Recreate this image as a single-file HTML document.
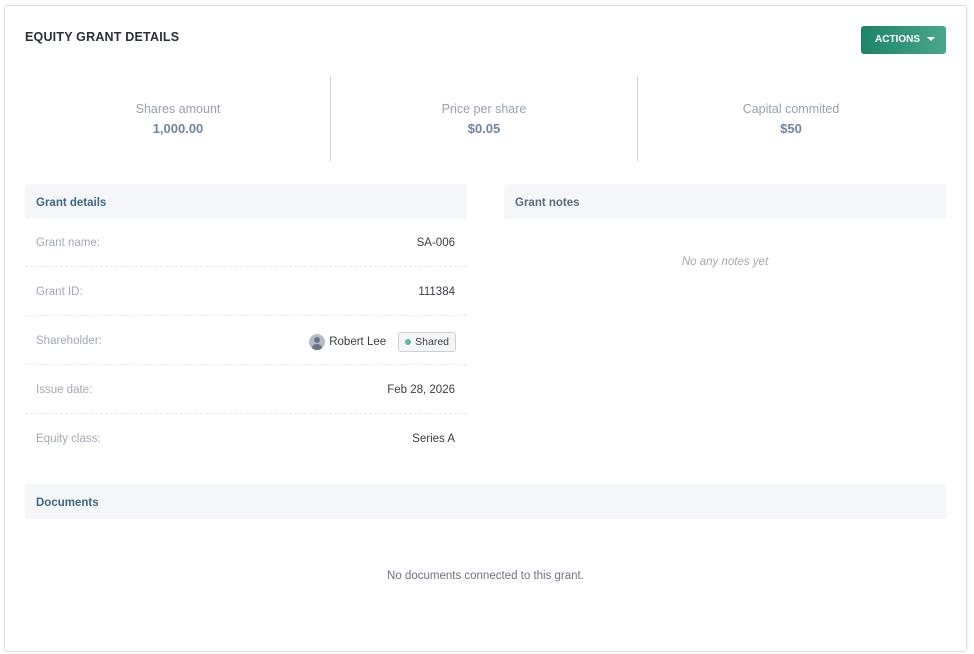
<!DOCTYPE html>
<html><head><style>
*{box-sizing:border-box;margin:0;padding:0}
body{width:974px;height:654px;background:#fff;font-family:"Liberation Sans",sans-serif;position:relative;overflow:hidden}
.card{position:absolute;left:4px;top:5px;width:963px;height:647px;border:1px solid #dcdfe3;border-radius:3px;box-shadow:0 0 2px rgba(0,0,0,.08)}
.abs{position:absolute}
.title{left:25px;top:30px;font-size:12.5px;font-weight:bold;color:#2b2f36;letter-spacing:.2px}
.btn{left:861px;top:26px;width:85px;height:28px;border-radius:3px;background:linear-gradient(90deg,#1c8468,#4aa68d);color:#fff;font-size:10px;font-weight:bold;line-height:28px;padding-left:14px}
.btn:after{content:"";position:absolute;left:66px;top:11px;border:4px solid transparent;border-top:4px solid #fff;border-bottom:0}
.stat{top:102px;width:306px;text-align:center}
.stat .l{font-size:12.5px;color:#9aa0ad}
.stat .v{font-size:13px;font-weight:bold;color:#7183a6;margin-top:5px}
.vl{top:76px;width:1px;height:85px;background:#d0d4da}
.hdr{height:35px;background:#f4f6f9;border-radius:3px;font-size:11.5px;font-weight:bold;color:#3f6788;padding-left:11px;line-height:35px;padding-top:2px}
.row{left:25px;width:442px;height:49px;border-bottom:1px dashed #e8eaee;font-size:11.5px;line-height:49px}
.row .k{position:absolute;left:11px;top:1px;color:#a3a8b2}
.row .val{position:absolute;right:12px;top:1px;color:#3a3e45}
</style></head><body>
<div class="card"></div>
<div class="abs title">EQUITY GRANT DETAILS</div>
<div class="abs btn">ACTIONS</div>
<div class="abs stat" style="left:25px"><div class="l">Shares amount</div><div class="v">1,000.00</div></div>
<div class="abs vl" style="left:330px"></div>
<div class="abs stat" style="left:331px"><div class="l">Price per share</div><div class="v">$0.05</div></div>
<div class="abs vl" style="left:637px"></div>
<div class="abs stat" style="left:638px"><div class="l">Capital commited</div><div class="v">$50</div></div>
<div class="abs hdr" style="left:25px;top:184px;width:442px">Grant details</div>
<div class="abs hdr" style="left:504px;top:184px;width:442px;color:#5f6b7a">Grant notes</div>
<div class="abs" style="left:504px;top:256px;width:442px;text-align:center;font-size:11.5px;font-style:italic;color:#a3a8b2">No any notes yet</div>
<div class="abs row" style="top:218px"><span class="k">Grant name:</span><span class="val">SA-006</span></div>
<div class="abs row" style="top:267px"><span class="k">Grant ID:</span><span class="val">111384</span></div>
<div class="abs row" style="top:316px"><span class="k">Shareholder:</span>
<span class="val" style="display:flex;align-items:center;height:49px;line-height:normal;right:11px">
<span style="width:16px;height:16px;border-radius:50%;background:#b4bac6;display:inline-block;position:relative;margin-right:4px;overflow:hidden"><span style="position:absolute;left:5px;top:3px;width:6px;height:6px;border-radius:50%;background:#6b7488"></span><span style="position:absolute;left:3px;top:10px;width:10px;height:8px;border-radius:50%;background:#6b7488"></span></span>
Robert Lee
<span style="margin-left:12px;border:1px solid #ccd0d6;background:#f4f5f7;border-radius:3px;height:20px;line-height:18px;padding:0 6px;font-size:10.5px;display:inline-flex;align-items:center"><span style="width:6px;height:6px;border-radius:50%;background:#5fb9a0;margin-right:4px"></span>Shared</span></span></div>
<div class="abs row" style="top:365px"><span class="k">Issue date:</span><span class="val">Feb 28, 2026</span></div>
<div class="abs row" style="top:414px;border:none"><span class="k">Equity class:</span><span class="val">Series A</span></div>
<div class="abs hdr" style="left:25px;top:484px;width:921px">Documents</div>
<div class="abs" style="left:25px;top:570px;width:921px;text-align:center;font-size:11.5px;color:#6d7380">No documents connected to this grant.</div>
</body></html>
